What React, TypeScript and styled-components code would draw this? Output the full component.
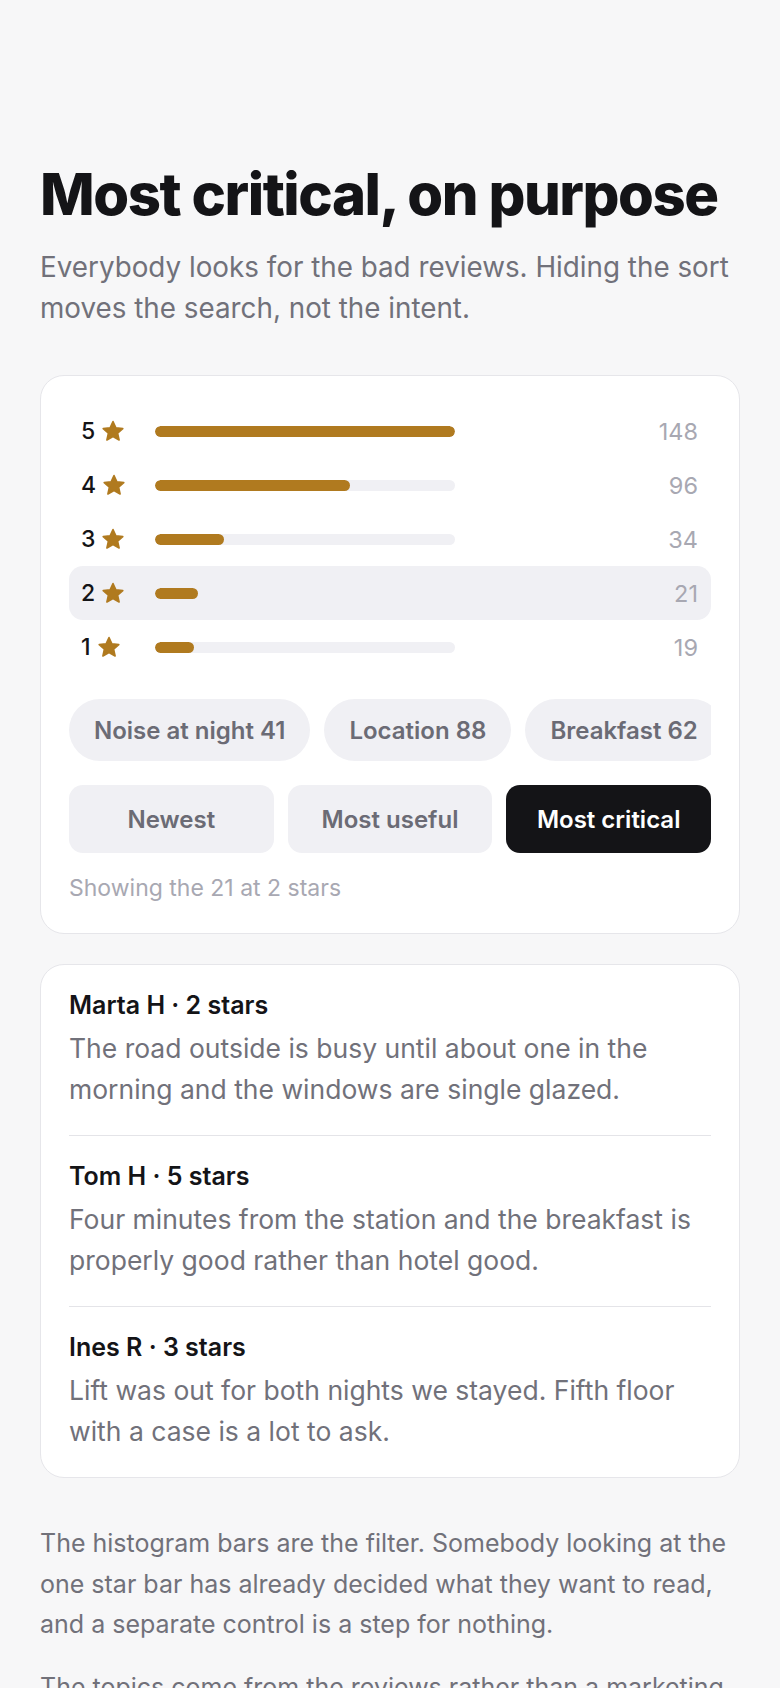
import React from "react";
import styled, { createGlobalStyle } from "styled-components";

const GlobalStyle = createGlobalStyle`
  * { box-sizing: border-box; }
  html, body { margin: 0; padding: 0; background: #f7f7f8; }
  body { font-family: Inter, "Noto Sans", "Liberation Sans", sans-serif; -webkit-font-smoothing: antialiased; }
`;

const Page = styled.main`
  padding: 162px 40px 40px;
  display: flex;
  flex-direction: column;
`;

const Title = styled.h1`
  margin: 0;
  font-size: 58px;
  line-height: 64px;
  font-weight: 800;
  letter-spacing: -0.025em;
  color: #141417;
`;

const Lead = styled.p`
  margin: 21px 0 0;
  font-size: 27.8px;
  line-height: 41px;
  color: #71717a;
`;

const Card = styled.section<{ $top: number }>`
  margin-top: ${(p) => p.$top}px;
  background: #ffffff;
  border: 1px solid #e6e6ea;
  border-radius: 24px;
`;

const FilterCard = styled(Card)`
  padding: 28px 28px 32px;
  display: flex;
  flex-direction: column;
`;

const Rows = styled.div`
  display: flex;
  flex-direction: column;
`;

const Row = styled.div<{ $active: boolean }>`
  display: grid;
  grid-template-columns: 62px 300px 1fr;
  column-gap: 12px;
  align-items: center;
  height: 54px;
  padding: 0 13px 0 12px;
  border-radius: 14px;
  background: ${(p) => (p.$active ? "#f0f0f4" : "transparent")};
`;

const Label = styled.span`
  display: flex;
  align-items: center;
  gap: 6px;
  font-size: 23px;
  font-weight: 500;
  color: #141417;
`;

const Track = styled.div`
  height: 11px;
  border-radius: 6px;
  background: #f0f0f4;
  overflow: hidden;
`;

const Fill = styled.div`
  height: 100%;
  border-radius: 6px;
  background: #b07a1f;
`;

const Count = styled.span`
  text-align: right;
  font-size: 23.5px;
  color: #a8a8b2;
`;

const Chips = styled.div`
  margin-top: 25px;
  display: flex;
  gap: 14px;
  overflow: hidden;
`;

const Chip = styled.button`
  flex: none;
  height: 62px;
  padding: 0 25px;
  border: none;
  border-radius: 31px;
  background: #f0f0f4;
  font-family: inherit;
  font-size: 24px;
  font-weight: 600;
  color: #6b6b75;
`;

const Sorts = styled.div`
  margin-top: 24px;
  display: grid;
  grid-template-columns: repeat(3, 1fr);
  gap: 14px;
`;

const SortButton = styled.button<{ $active: boolean }>`
  height: 68px;
  border: none;
  border-radius: 14px;
  font-family: inherit;
  font-size: 24px;
  font-weight: 600;
  background: ${(p) => (p.$active ? "#141417" : "#f0f0f4")};
  color: ${(p) => (p.$active ? "#ffffff" : "#6b6b75")};
`;

const Status = styled.p`
  margin: 22px 0 0;
  font-size: 23px;
  line-height: 26px;
  color: #a8a8b2;
`;

const ReviewCard = styled(Card)`
  padding: 0 28px;
`;

const Review = styled.article`
  padding: 25px 0 25px;
  & + & {
    border-top: 1px solid #e4e4e8;
  }
`;

const ReviewTitle = styled.h3`
  margin: 0;
  font-size: 25px;
  line-height: 30px;
  font-weight: 600;
  color: #141417;
`;

const ReviewBody = styled.p`
  margin: 8px 0 0;
  font-size: 26.5px;
  line-height: 41px;
  color: #71717a;
`;

const Notes = styled.div`
  margin-top: 45px;
  display: flex;
  flex-direction: column;
  gap: 22px;
`;

const Note = styled.p`
  margin: 0;
  font-size: 25px;
  line-height: 40.5px;
  color: #71717a;
`;

const Star = () => (
  <svg width="24" height="24" viewBox="0 0 24 24" aria-hidden="true">
    <polygon
      points="12,2.5 14.9,8.9 21.8,9.6 16.6,14.2 18.1,21 12,17.5 5.9,21 7.4,14.2 2.2,9.6 9.1,8.9"
      fill="#b07a1f"
      stroke="#b07a1f"
      strokeWidth="1.6"
      strokeLinejoin="round"
    />
  </svg>
);

const dist = [
  { stars: 5, count: 148 },
  { stars: 4, count: 96 },
  { stars: 3, count: 34 },
  { stars: 2, count: 21 },
  { stars: 1, count: 19 },
];

const topics = ["Noise at night 41", "Location 88", "Breakfast 62", "Staff 57", "Rooms 49"];
const sorts = ["Newest", "Most useful", "Most critical"];

const reviews = [
  {
    who: "Marta H · 2 stars",
    text: "The road outside is busy until about one in the morning and the windows are single glazed.",
  },
  {
    who: "Tom H · 5 stars",
    text: "Four minutes from the station and the breakfast is properly good rather than hotel good.",
  },
  {
    who: "Ines R · 3 stars",
    text: "Lift was out for both nights we stayed. Fifth floor with a case is a lot to ask.",
  },
];

export default function App() {
  const max = Math.max(...dist.map((d) => d.count));
  return (
    <>
      <GlobalStyle />
      <Page>
        <Title>Most critical, on purpose</Title>
        <Lead>Everybody looks for the bad reviews. Hiding the sort moves the search, not the intent.</Lead>

        <FilterCard $top={46}>
          <Rows>
            {dist.map((d) => (
              <Row key={d.stars} $active={d.stars === 2}>
                <Label>
                  {d.stars}
                  <Star />
                </Label>
                <Track>
                  <Fill style={{ width: `${(d.count / max) * 100}%` }} />
                </Track>
                <Count>{d.count}</Count>
              </Row>
            ))}
          </Rows>
          <Chips>
            {topics.map((t) => (
              <Chip key={t}>{t}</Chip>
            ))}
          </Chips>
          <Sorts>
            {sorts.map((s) => (
              <SortButton key={s} $active={s === "Most critical"}>
                {s}
              </SortButton>
            ))}
          </Sorts>
          <Status>Showing the 21 at 2 stars</Status>
        </FilterCard>

        <ReviewCard $top={30}>
          {reviews.map((r) => (
            <Review key={r.who}>
              <ReviewTitle>{r.who}</ReviewTitle>
              <ReviewBody>{r.text}</ReviewBody>
            </Review>
          ))}
        </ReviewCard>

        <Notes>
          <Note>
            The histogram bars are the filter. Somebody looking at the one star bar has already decided what they
            want to read, and a separate control is a step for nothing.
          </Note>
          <Note>
            The topics come from the reviews rather than a marketing list, so the counts say what guests actually
            talk about.
          </Note>
        </Notes>
      </Page>
    </>
  );
}
